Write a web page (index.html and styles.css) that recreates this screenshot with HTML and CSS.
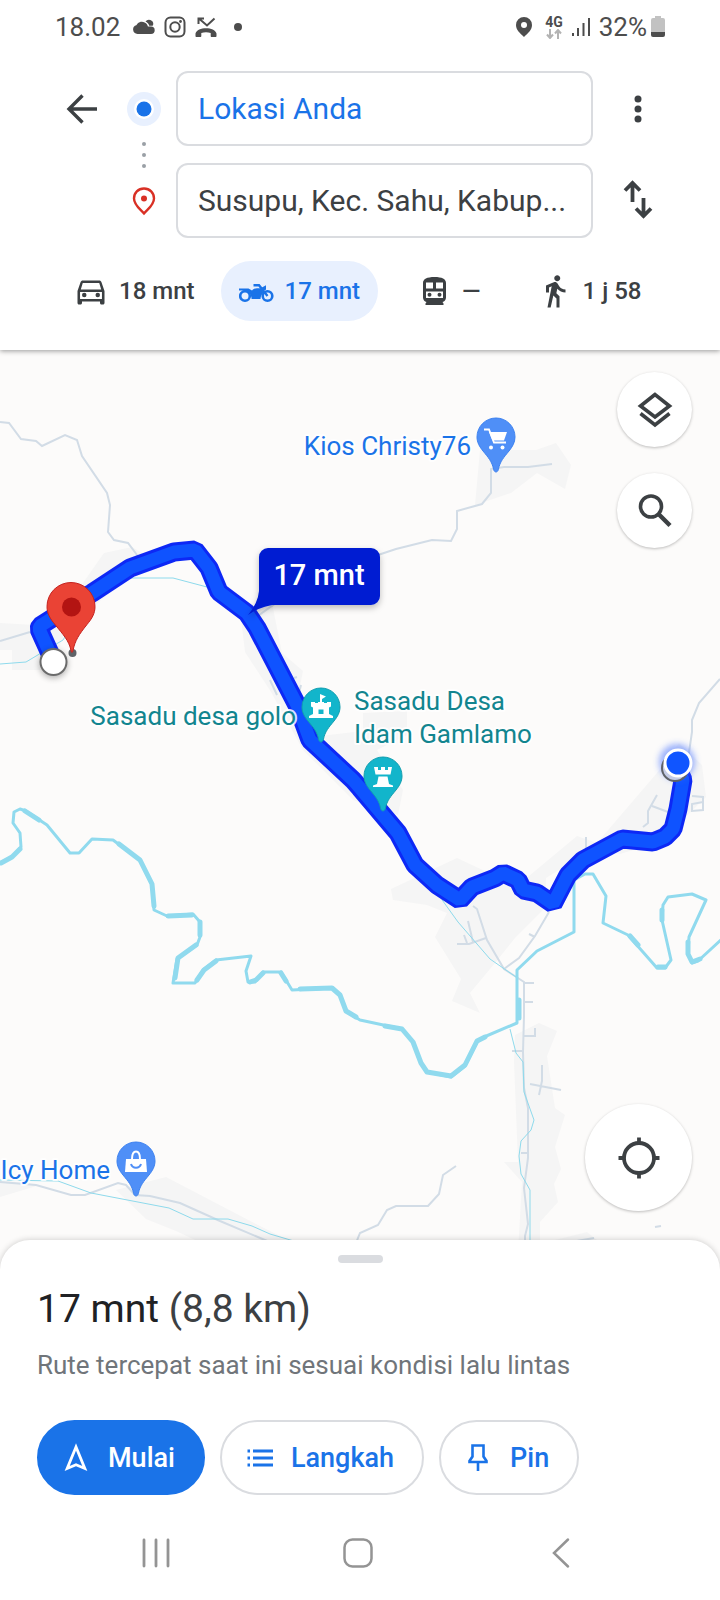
FILE: index.html
```html
<!DOCTYPE html>
<html lang="id">
<head>
<meta charset="utf-8">
<meta name="viewport" content="width=device-width, initial-scale=1">
<title>Rute ke Susupu</title>
<link rel="stylesheet" href="styles.css">
</head>
<body>
<div class="app">
  <header class="header">
    <div class="status">
      <div class="status-group">
        <span class="status-text">18.02</span>
        <svg class="s-icon" viewBox="0 0 22 22" aria-hidden="true"><g fill="#4d4d4d"><path d="M4.500 18a4.500 4.500 0 0 1-1.200-8.800A6.200 6.200 0 0 1 13 7.200c1 .8 1.700 2 1.900 3.400H18a3.700 3.700 0 0 1 0 7.400z"/><path d="M12.500 5.600a4.300 4.300 0 0 1 7.800 2.600l-.6 1.500h-3.500c-.5-1.900-1.800-3.300-3.700-4.100z"/></g></svg>
        <svg class="s-icon" viewBox="0 0 22 22" aria-hidden="true"><g fill="none" stroke="#4d4d4d" stroke-width="2"><rect x="1.500" y="1.500" width="19" height="19" rx="5"/><circle cx="11" cy="11" r="4.700"/></g><circle cx="16.500" cy="5.500" r="1.400" fill="#4d4d4d"/></svg>
        <svg class="s-icon" viewBox="0 0 22 22" aria-hidden="true"><path d="M19.500 2.500 12 9.500 4.500 3M3.500 8V2.500H9" fill="none" stroke="#4d4d4d" stroke-width="2"/><path d="M.5 20v-2.500C1.500 14 6 12.300 11 12.300s9.500 1.700 10.500 5.200V20c0 .6-.4 1-1 1h-3.800c-.6 0-1-.4-1-1v-3c-3-1-6.400-1-9.400 0v3c0 .6-.4 1-1 1H1.500c-.6 0-1-.4-1-1z" fill="#4d4d4d"/></svg>
        <span class="status-dot"></span>
      </div>
      <div class="status-group status-right">
        <svg class="s-loc" viewBox="0 0 16 20" aria-hidden="true"><path d="M8 0a8 8 0 0 0-8 8c0 5 4 8 8 12 4-4 8-7 8-12a8 8 0 0 0-8-8z" fill="#4d4d4d"/><circle cx="8" cy="8" r="3" fill="#fff"/></svg>
        <span class="net"><span class="net-text">4G</span><svg viewBox="0 0 16 10" aria-hidden="true"><path d="M4 0v8M1 5.500 4 9l3-3.500M12 10V1.500M9 4.500 12 1l3 3.500" fill="none" stroke="#b3b3b3" stroke-width="2"/></svg></span>
        <svg class="s-signal" viewBox="0 0 18 20" aria-hidden="true"><path d="M1 16v3M6 11v8M11.500 6v13M17 1v18" stroke="#4d4d4d" stroke-width="2"/></svg>
        <span class="status-text battery-text">32%</span>
        <svg class="s-battery" viewBox="0 0 14 22" aria-hidden="true"><path d="M4 0h6v2h2a2 2 0 0 1 2 2v12H0V4a2 2 0 0 1 2-2h2z" fill="#c2c2c2"/><path d="M0 16h14v3a2 2 0 0 1-2 2H2a2 2 0 0 1-2-2z" fill="#4d4d4d"/></svg>
      </div>
    </div>

    <form class="route-form">
      <button class="icon-btn" type="button" aria-label="Kembali"><svg width="32" height="32" viewBox="0 0 32 32"><path d="M31 16H4M16.500 2.500 3 16l13.500 13.500" fill="none" stroke="#3c4043" stroke-width="3.400"/></svg></button>
      <svg class="route-marks" viewBox="0 0 40 167" aria-hidden="true">
        <circle cx="21" cy="38" r="17" fill="#e8f0fe"/><circle cx="21" cy="38" r="10" fill="#fff"/><circle cx="21" cy="38" r="7.500" fill="#1a73e8"/>
        <g fill="#9aa0a6"><circle cx="21" cy="73" r="2"/><circle cx="21" cy="84" r="2"/><circle cx="21" cy="95" r="2"/></g>
        <path d="M21 117.500c-5.800 0-10 4.500-10 10 0 6.500 6 10.500 10 15 4-4.500 10-8.500 10-15 0-5.500-4.200-10-10-10z" fill="none" stroke="#d93025" stroke-width="2.400"/><circle cx="21" cy="127.500" r="3" fill="#d93025"/>
      </svg>
      <input class="field field-from" type="text" aria-label="Titik awal" value="Lokasi Anda">
      <button class="icon-btn more" type="button" aria-label="Opsi lainnya"><svg width="32" height="32" viewBox="0 0 32 32"><g fill="#3c4043"><circle cx="16" cy="6" r="3.500"/><circle cx="16" cy="16" r="3.500"/><circle cx="16" cy="26" r="3.500"/></g></svg></button>
      <input class="field field-to" type="text" aria-label="Tujuan" value="Susupu, Kec. Sahu, Kabup...">
      <button class="icon-btn swap" type="button" aria-label="Tukar titik awal dan tujuan"><svg width="32" height="44" viewBox="0 0 32 44"><path d="M10.500 23V4M3 11.500 10.500 4l7.500 7.500M21.500 19v18M14 29.500l7.500 7.500 7.500-7.500" fill="none" stroke="#3c4043" stroke-width="3.800"/></svg></button>
    </form>

    <nav class="modes" aria-label="Moda transportasi">
      <button class="mode" type="button"><svg viewBox="0 0 24 24" aria-hidden="true"><path fill="currentColor" d="M18.920 6.010C18.720 5.420 18.160 5 17.500 5h-11c-.66 0-1.210.42-1.420 1.010L3 12v8c0 .55.45 1 1 1h1c.55 0 1-.45 1-1v-1h12v1c0 .55.45 1 1 1h1c.55 0 1-.45 1-1v-8zM6.500 6.700h11l1.300 4.300H5.200zM19.300 17.300H4.700v-4.700h14.600z"/><g fill="currentColor"><circle cx="7.500" cy="14.700" r="1.500"/><circle cx="16.500" cy="14.700" r="1.500"/></g></svg>18 mnt</button>
      <button class="mode mode-active" type="button" aria-pressed="true"><svg viewBox="0 0 36 36" aria-hidden="true"><g fill="none" stroke="currentColor" stroke-width="2.600"><circle cx="6" cy="23" r="4.800"/><circle cx="28.500" cy="23" r="4.800"/><path d="M14.500 12.200H20L28.500 23" stroke-width="2.400"/></g><path fill="currentColor" d="M0 15.500h9.500l3.500 2c1.500-1.600 3-2.200 5-2.200h3.500l5.500-3.100v4.600l-3.600.8 1.300 2c-2 1.500-3 3.600-3.200 6.400H12.600c0-3-1.200-5.300-3.800-6.800C6.500 17.700 3 17.300 0 17.400z"/></svg>17 mnt</button>
      <button class="mode" type="button" aria-label="Transportasi umum, tidak tersedia"><svg viewBox="0 0 36 36" aria-hidden="true"><path fill="currentColor" fill-rule="evenodd" d="M7 10c0-4 4-6 11.500-6S30 6 30 10v14.500c0 2.300-1.500 4-3.500 4.500l1 1.500V32h-18v-1.500l1-1.500C8.500 28.500 7 26.800 7 24.500zM10 9.500v6h7v-6zm10 0v6h7v-6zM10 18.500v6.500h17v-6.500z"/><g fill="currentColor"><circle cx="13.500" cy="21.800" r="2"/><circle cx="23.500" cy="21.800" r="2"/></g></svg>—</button>
      <button class="mode" type="button"><svg viewBox="0 0 24 24" aria-hidden="true"><path fill="currentColor" d="M13.500 5.500c1.100 0 2-.9 2-2s-.9-2-2-2-2 .9-2 2 .9 2 2 2zM9.800 8.900 7 23h2.100l1.800-8 2.100 2v6h2v-7.500l-2.100-2 .6-3C14.800 12 16.800 13 19 13v-2c-1.900 0-3.500-1-4.300-2.400l-1-1.600c-.4-.6-1-1-1.700-1-.3 0-.5.100-.8.100L6 8.300V13h2V9.600l1.800-.7"/></svg>1 j 58</button>
    </nav>
  </header>

  <main class="map">
    <svg class="map-canvas" viewBox="0 350 720 930" preserveAspectRatio="xMidYMid slice" role="img" aria-label="Peta rute 17 mnt">
      <defs>
        <path id="pin" d="M0-19a19 19 0 0 0-19 19c0 5.500 2.600 9.800 6 14 5 6.200 9.200 10.600 10.600 18.500.8 3.300 4 3.300 4.800 0C3.800 24.600 8 20.200 13 14c3.400-4.200 6-8.500 6-14A19 19 0 0 0 0-19z"/>
        <path id="route" d="M53 660L39 629l1-3 52-33 38-25 44-16 21-2 14 18 10 24 28 21 10 15 40 77 13 35 43 40 7 8 38 45 17 32 22 20 23 15 12-13 23-9 8-5 15 7 5 10 14 3 16 11 15-29 15-15 39-21 31 3 12-5 8-8 5-20 5-29-6-13"/>
        <filter id="soft" x="-20%" y="-20%" width="140%" height="160%"><feDropShadow dx="0" dy="3" stdDeviation="3" flood-color="#000" flood-opacity=".25"/></filter>
        <filter id="glow" x="-60%" y="-60%" width="220%" height="220%"><feGaussianBlur stdDeviation="3"/></filter>
      </defs>
      <g class="area">
        <path d="M480 450h56l20-7 15 22-6 24-28-16-26 20-36 12z"/>
        <path d="M83 583l21-30 28-6 20 12-50 40-40 40-10 31H12v-20H0v-27l35 2z"/>
        <path d="M240 610l32-7 10 50 21 18-5 25 22 40 43-5 0-18 44-2v24l-30 15 26 40-5 25-45-15-50-50-32-58-26-40z"/>
        <path d="M391 889l66-31 60 28 60-50 20 7 60-70 22-30 23 22 4 32-46 45-40 12-26-6-48 30-1 30-30 30-20 25-25 30 10 20-28-12 9-22-26-42 12-24-20-8-34-5z"/>
        <path d="M515 1035l24-12 18 8-10 25 8 52 10 7-10 32 6 22-7 15 4 18-18 20v30h-22l4-70-18-20h14l-4-100z"/>
        <path d="M116 1190l50-13 90 47 80 40h-90l-70-33-30-12zM0 1180l40 5-40 12zM555 1240l32-8 10 8z"/>
      </g>
      <g class="road">
        <path d="M0 422l9 1 12 16 15 2 6 5 23-11 12 5 5 16 25 37 3 12-2 27 6 8 14 3 9 12 6 14"/>
        <path d="M552 464l-24 3h-24l-13 2v24l-9 11-25 7v18l-6 12-19-1-36 9-18 6-60 18-70 50"/>
        <path d="M0 641l30-9M270 680l7 15M294 678l3-1M301 685l-2 8"/>
        <path d="M720 679l-21 24-7 17v12l-5 34M657 795l-9 16v12l-5 4M652 806l16 6M692 796l11 1v13l-11 1v-7l11-2M586 837v12"/>
        <path d="M473 906l4 3 10 31 17 29 20 13v34l-1 36 1 36 4 20v50l-4 30 4 36-3 12v14"/>
        <path d="M549 912l-14 24-16 22-15 11M457 944h12l17-6M468 921l5 21M464 935l3 8M529 934l6 3M524 983h10M524 1002h9M523 1036h12v-8M512 1051h11M542 1065v16l-3 14M530 1084l31 6M521 1153h7"/>
        <path d="M456 1166l-13 9-4 19-11 12h-32l-9 4-9 15-18 8-6 15"/>
        <path d="M0 1182l36 3 35 10h14l33-12 8 2 9 10 15 1 30 7 40 18 52 22M655 1227l6-1M565 1243l29-5"/>
      </g>
      <g class="stream">
        <path d="M0 664l26-2 37-22 8-13M130 578h43l34 9M440 897l18 25 32 37 26 18M510 1029l6 24 7 9 1 30 10 28-3 10-10 11-2 15 2 18 9 16v60"/>
        <path d="M0 1180l58 1 33 12 78 15 24 11h35l24 7 18 8 34 10"/>
      </g>
      <path class="river" d="M-3 864l15-7 9-10-1-14-7-10 1-11 6-3 6 2 21 14 23 28h9l13-14 21 1 27 20 12 25 2 25 13 6 26-2 7 8v15l-3 8-20 14-4 24h22l8-13 13-10 35-4-5 15 2 11h7l8-10h18l11 18 41-2 7 7 7 17 13 8 42 9 11 13 8 21 6 9 24 5 14-11 12-24 7-5 33-14v-53l20-19 37-19v-52l11-6h8l13 22-3 27 25 12 29 33h8l6-8-9-40 1-15 5-8 24-3 14 6-17 37-1 16 4 10 6-2 25-23"/>
      <path class="river-wide" d="M1 863l11-6 8-8M25 811l14 9M119 844l21 16 12 24 2 22M168 916l24-1M200 922v13M196 945l-18 13-3 20M197 980l7-10 12-9M250 982l6-2 7-7M281 973l5 8M300 989l32-1 8 7 6 16 10 6M385 1026l17 3 11 13 8 21 6 9 24 4 14-11 12-24 8-4M519 1000v18M630 936l8 9M658 967h7M662 910v10M688 942v12l4 8 8-3"/>
      <use href="#route" class="route-edge"/>
      <use href="#route" class="route-core"/>
      <g filter="url(#soft)"><path d="M268 548h103a9 9 0 0 1 9 9v39a9 9 0 0 1-9 9H272q-15 3-24 10 10-12 11-24v-34a9 9 0 0 1 9-9z" fill="#051ed2"/></g>
      <text class="bubble-text" x="319" y="585">17 mnt</text>

      <circle cx="53.500" cy="664" r="14" fill="#000" opacity=".3" filter="url(#glow)"/>
      <circle cx="53.500" cy="662" r="13" fill="#fff" stroke="#6b6b6b" stroke-width="2"/>
      <circle cx="72.500" cy="653" r="4" fill="#5f6368"/>
      <path d="M71 582.500a24 24 0 0 0-24 24c0 7 3 12 8 18 8 10 14 16 16 26 .5 2.500 1.500 2.500 2 0 2-10 6-16 14-26 5-6 8-11 8-18a24 24 0 0 0-24-24z" fill="#ea4335" stroke="#c5221f"/>
      <circle cx="71.500" cy="607" r="9.500" fill="#b31412"/>

      <circle cx="677" cy="762" r="18" fill="#3d6bff" opacity=".5" filter="url(#glow)"/>
      <circle cx="675" cy="768" r="13" fill="#c4cce6" stroke="#5f6368" stroke-width="2"/>
      <circle cx="678" cy="763" r="13" fill="#1055ff" stroke="#fff" stroke-width="3"/>

      <g transform="translate(496 437)"><use href="#pin" fill="#4f8ff7" stroke="#3d82f0"/><path d="M-12-7.500h5l5 13H10" fill="none" stroke="#fff" stroke-width="1.800"/><path d="M-7-5h18L8 3.500H-3.500z" fill="#fff"/><circle cx="-5" cy="10.500" r="2" fill="#fff"/><circle cx="6.500" cy="10.500" r="2" fill="#fff"/></g>
      <g transform="translate(136 1161)"><use href="#pin" fill="#4f8ff7" stroke="#3d82f0"/><path d="M-10-2h20l1 13h-22z" fill="#fff"/><path d="M-4-2c0-10 8-10 8 0" fill="none" stroke="#fff" stroke-width="2"/><path d="M-5 3c1.500 5 8.500 5 10 0" fill="none" stroke="#4f8ff7" stroke-width="2"/></g>
      <g transform="translate(321 707)"><use href="#pin" fill="#12b5cb" stroke="#129eaf"/><path d="M-1-13 5-10.500 1-8v3h2v1h3v-1h4v4.500l-2 1V7l4 2v2h-24V9l4-2V.5l-2-1V-5h4v1h3v-1h2zM-2.500 7h5V2.500h-5z" fill="#fff" fill-rule="evenodd"/></g>
      <g transform="translate(383 776)"><use href="#pin" fill="#12b5cb" stroke="#129eaf"/><path d="M-9-9h4v3h3v-3h4v3h3v-3h4L7.500-1.500h-15zM-4.500.5h9L6 8l4 1.500V11h-20V9.500L-6 8z" fill="#fff"/></g>

      <g class="label label-blue">
        <text x="471" y="455" text-anchor="end">Kios Christy76</text>
        <text x="110" y="1179" text-anchor="end">Icy Home</text>
      </g>
      <g class="label label-teal">
        <text x="296" y="725" text-anchor="end">Sasadu desa golo</text>
        <text x="354" y="710">Sasadu Desa</text>
        <text x="354" y="743">Idam Gamlamo</text>
      </g>
    </svg>

    <div class="map-tools">
      <button class="fab" type="button" aria-label="Lapisan peta"><svg width="36" height="36" viewBox="0 0 36 36"><path d="M18 2.500 3.500 14 18 25 32.500 14zM3.500 21.500 18 33l14.500-11.500" fill="none" stroke="#3c4043" stroke-width="3.600"/></svg></button>
      <button class="fab" type="button" aria-label="Telusuri di sepanjang rute"><svg width="36" height="36" viewBox="0 0 36 36"><circle cx="14" cy="13.500" r="10.500" fill="none" stroke="#3c4043" stroke-width="3.600"/><path d="M21.500 21 33 32.500" stroke="#3c4043" stroke-width="4.400"/></svg></button>
    </div>
    <button class="fab fab-large" type="button" aria-label="Lokasi saya"><svg width="42" height="42" viewBox="0 0 42 42"><g fill="none" stroke="#3c4043" stroke-width="3.800"><circle cx="21" cy="21" r="15"/><path d="M21 .5v6M21 35.500v6M.5 21h6M35.500 21h6"/></g></svg></button>
  </main>

  <section class="sheet">
    <div class="handle"></div>
    <h1 class="summary"><span class="duration">17 mnt</span> (8,8 km)</h1>
    <p class="note">Rute tercepat saat ini sesuai kondisi lalu lintas</p>
    <div class="actions">
      <button class="action action-primary" type="button"><svg viewBox="0 0 30 30" aria-hidden="true"><path d="M15 4 6.200 25.500 15 21.800l8.800 3.700z" fill="none" stroke="currentColor" stroke-width="2.800"/></svg>Mulai</button>
      <button class="action" type="button"><svg viewBox="0 0 30 30" aria-hidden="true"><path d="M9 8h20M9 15h20M9 22h20M3.500 8H6M3.500 15H6M3.500 22H6" stroke="currentColor" stroke-width="3"/></svg>Langkah</button>
      <button class="action" type="button"><svg viewBox="0 0 30 30" aria-hidden="true"><path d="M9.500 2.500h11v11l3 4.500v1H6.500v-1l3-4.500zM15 19v9" fill="none" stroke="currentColor" stroke-width="2.600"/></svg>Pin</button>
    </div>
    <nav class="sysnav" aria-label="Navigasi sistem">
      <button class="icon-btn" type="button" aria-label="Aplikasi terbaru"><svg width="32" height="32" viewBox="0 0 32 32"><path d="M4 3v26M16 3v26M28 3v26" stroke="#949494" stroke-width="2.800" stroke-linecap="round"/></svg></button>
      <button class="icon-btn" type="button" aria-label="Beranda"><svg width="32" height="32" viewBox="0 0 32 32"><rect x="2.500" y="2.500" width="27" height="27" rx="8" fill="none" stroke="#949494" stroke-width="2.500"/></svg></button>
      <button class="icon-btn" type="button" aria-label="Kembali"><svg width="32" height="32" viewBox="0 0 32 32"><path d="M23 2.500 9 16l14 13.500" fill="none" stroke="#949494" stroke-width="2.500" stroke-linecap="round"/></svg></button>
    </nav>
  </section>
</div>
</body>
</html>
```
FILE: styles.css
```css
* {
  box-sizing: border-box;
}

body {
  margin: 0;
  background: #fff;
  color: #3c4043;
  font-family: Roboto, "Noto Sans", sans-serif;
}

button {
  margin: 0;
  padding: 0;
  border: 0;
  background: none;
  color: inherit;
  font: inherit;
  cursor: pointer;
}

svg {
  display: block;
  flex: none;
}

.app {
  display: flex;
  flex-direction: column;
  min-height: 100vh;
}

.header {
  position: relative;
  z-index: 1;
  padding-bottom: 29px;
  background: #fff;
  box-shadow: 0 1px 5px rgba(0, 0, 0, 0.4);
}

/* Status bar */
.status {
  display: flex;
  justify-content: space-between;
  padding: 11px 55px 0;
  height: 71px;
  color: #4d4d4d;
}

.status-group {
  display: flex;
  align-items: center;
  gap: 9px;
  height: 32px;
}

.status-text {
  font-size: 26px;
  line-height: 32px;
}

.s-icon {
  width: 22px;
  height: 22px;
}

.status-group .s-icon:nth-of-type(1) {
  margin-left: 4px;
}

.status-dot {
  width: 8px;
  height: 8px;
  margin-left: 8px;
  border-radius: 50%;
  background: #4d4d4d;
}

.s-loc {
  width: 16px;
  height: 20px;
  margin-right: 4px;
}

.net {
  display: flex;
  flex-direction: column;
  align-items: center;
}

.net-text {
  font-size: 14px;
  font-weight: 700;
  line-height: 13px;
}

.net svg {
  width: 16px;
  height: 10px;
}

.s-signal {
  width: 18px;
  height: 20px;
}

.battery-text {
  margin-right: -5px;
}

.s-battery {
  width: 14px;
  height: 22px;
}

/* Start and destination */
.route-form {
  display: grid;
  grid-template-columns: 56px 66px 1fr 90px;
  grid-template-rows: 75px 75px;
  row-gap: 17px;
  padding: 0 37px 0 54px;
}

.icon-btn {
  display: flex;
  align-items: center;
  justify-content: center;
}

.route-marks {
  grid-column: 2;
  grid-row: 1 / 3;
  justify-self: center;
  width: 40px;
  height: 167px;
}

.field {
  grid-column: 3;
  min-width: 0;
  width: 100%;
  padding: 0 20px;
  border: 2px solid #dadce0;
  border-radius: 12px;
  background: #fff;
  color: #3c4043;
  font: 400 30px/36px Roboto, "Noto Sans", sans-serif;
  text-overflow: ellipsis;
}

.field-from {
  grid-row: 1;
  color: #1a73e8;
}

.field-to {
  grid-row: 2;
}

.more {
  grid-column: 4;
  grid-row: 1;
}

.swap {
  grid-column: 4;
  grid-row: 2;
}

/* Travel modes */
.modes {
  display: flex;
  gap: 8px;
  margin-top: 23px;
  padding: 0 55px;
}

.mode {
  display: flex;
  align-items: center;
  gap: 10px;
  height: 60px;
  padding: 0 18px;
  border-radius: 30px;
  font-size: 25px;
  font-weight: 500;
  font-size: 24px;
  white-space: nowrap;
}

.mode:nth-child(n + 3) {
  padding-left: 30px;
}

.mode svg {
  width: 36px;
  height: 36px;
}

.mode-active {
  background: #e8f0fe;
  color: #1a73e8;
}

/* Map */
.map {
  position: relative;
  flex: 1;
  min-height: 640px;
  background: #fcfbfa;
}

.map-canvas {
  position: absolute;
  inset: 0;
  width: 100%;
  height: 100%;
}

.area {
  fill: #f5f5f5;
}

.road,
.stream,
.river,
.river-wide,
.route-edge,
.route-core {
  fill: none;
}

.road {
  stroke: #d2dce6;
  stroke-width: 2;
}

.stream {
  stroke: #8edaec;
  stroke-width: 1;
}

.river,
.river-wide {
  stroke: #90daee;
  stroke-width: 3;
  stroke-linejoin: round;
}

.river-wide {
  stroke-width: 5;
  stroke-linecap: round;
}

.route-edge {
  stroke: #0d28f5;
  stroke-width: 19;
  stroke-linejoin: bevel;
}

.route-core {
  stroke: #0f53ff;
  stroke-width: 13;
  stroke-linejoin: bevel;
}

.bubble-text {
  fill: #fff;
  font-size: 29px;
  font-weight: 500;
  text-anchor: middle;
}

.label {
  font-size: 26px;
  stroke: #fff;
  stroke-width: 4;
  stroke-opacity: 0.85;
  stroke-linejoin: round;
  paint-order: stroke;
}

.label-blue {
  fill: #1a73e8;
}

.label-teal {
  fill: #12858f;
}

.map-tools {
  position: absolute;
  top: 22px;
  right: 28px;
  display: flex;
  flex-direction: column;
  gap: 26px;
}

.fab {
  display: flex;
  align-items: center;
  justify-content: center;
  width: 75px;
  height: 75px;
  border-radius: 50%;
  background: #fff;
  box-shadow: 0 1px 3px rgba(0, 0, 0, 0.25);
}

.fab-large {
  position: absolute;
  right: 28px;
  bottom: 69px;
  width: 107px;
  height: 107px;
}

/* Bottom sheet */
.sheet {
  position: relative;
  margin-top: -40px;
  padding: 15px 37px 0;
  border-radius: 30px 30px 0 0;
  background: #fff;
  box-shadow: 0 0 6px rgba(0, 0, 0, 0.2);
}

.handle {
  width: 45px;
  height: 8px;
  margin: 0 auto;
  border-radius: 4px;
  background: #dadce0;
}

.summary {
  margin: 22px 0 0;
  font-size: 39px;
  font-weight: 400;
  line-height: 48px;
}

.duration {
  color: #202124;
}

.note {
  margin: 16px 0 0;
  color: #70757a;
  font-size: 26px;
  line-height: 32px;
}

.actions {
  display: flex;
  flex-wrap: wrap;
  gap: 15px;
  margin-top: 39px;
}

.action {
  display: flex;
  align-items: center;
  gap: 17px;
  height: 75px;
  padding: 0 28px 0 22px;
  border: 2px solid #dadce0;
  border-radius: 38px;
  color: #1a73e8;
  font-size: 27px;
  font-weight: 500;
}

.action svg {
  width: 30px;
  height: 30px;
}

.action-primary {
  border-color: #1a73e8;
  background: #1a73e8;
  color: #fff;
}

.sysnav {
  display: grid;
  grid-template-columns: repeat(3, 1fr);
  height: 105px;
  padding: 11px 0 0;
  margin: 0 21px 0 18px;
}
```
